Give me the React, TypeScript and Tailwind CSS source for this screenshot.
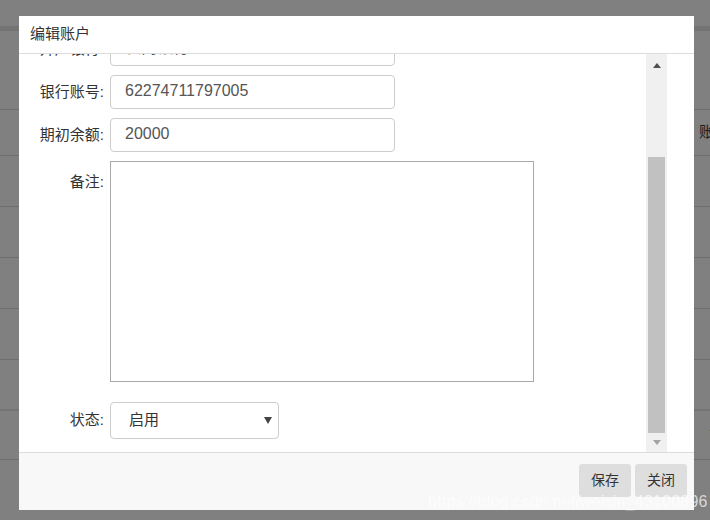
import React from "react"

const cjk = { fontFamily: '"Liberation Sans", "Noto Sans CJK SC", sans-serif' }

function Row({ label, children }: { label: string; children: React.ReactNode }) {
  return (
    <div className="flex items-start">
      <label className="w-[86px] shrink-0 text-right text-[15px] leading-[34px] text-[#333] pr-[1px]">{label}</label>
      <div className="ml-[5px]">{children}</div>
    </div>
  )
}

function TextInput({ value }: { value: string }) {
  return (
    <div className="w-[285px] h-[34px] border border-[#ccc] rounded-[4px] px-[14px] text-[16px] leading-[30px] text-[#555] bg-white overflow-hidden">
      {value}
    </div>
  )
}

export default function App() {
  return (
    <div className="relative w-[710px] h-[520px] bg-[#808080] overflow-hidden" style={cjk}>
      {/* page behind the overlay */}
      <div className="absolute inset-0 flex flex-col">
        <div className="h-[26px] bg-[#808080]" />
        <div className="h-[5px] bg-[#747474]" />
        <div className="h-[79px] border-b border-[#6e6e6e]" />
        <div className="h-[46px] border-b border-[#6e6e6e] flex items-center justify-end">
          <span className="text-[15px] text-[#1a1a1a] mr-[-4px]">账</span>
        </div>
        <div className="h-[51px] border-b border-[#6e6e6e]" />
        <div className="h-[51px] border-b border-[#6e6e6e]" />
        <div className="h-[51px] border-b border-[#6e6e6e]" />
        <div className="h-[51px] border-b border-[#6e6e6e]" />
        <div className="h-[51px] border-b-2 border-[#747474]" />
        <div className="h-[49px] border-b border-[#6e6e6e] flex items-center justify-end">
          <span className="text-[15px] text-[#8b0000] mr-[-8px]">¥</span>
        </div>
      </div>

      {/* dialog */}
      <div className="absolute left-[19px] top-[16px] w-[675px] h-[494px] bg-white flex flex-col">
        <div className="h-[38px] shrink-0 border-b border-[#dcdcdc] flex items-center pl-[11px] text-[15px] text-[#333]">
          编辑账户
        </div>
        <div className="flex-1 flex min-h-0">
          <div className="w-[627px] overflow-hidden">
            <div className="mt-[-22px] flex flex-col gap-[9px]">
              <Row label="开户银行:">
                <TextInput value="农商银行" />
              </Row>
              <Row label="银行账号:">
                <TextInput value="62274711797005" />
              </Row>
              <Row label="期初余额:">
                <TextInput value="20000" />
              </Row>
              <div className="flex items-start">
                <label className="w-[86px] shrink-0 text-right text-[15px] leading-[22px] pt-[10px] text-[#333] pr-[1px]">备注:</label>
                <div className="ml-[5px] w-[424px] h-[221px] border border-[#a9a9a9] bg-white" />
              </div>
              <div className="flex items-center mt-[11px]">
                <label className="w-[86px] shrink-0 text-right text-[15px] text-[#333] pr-[1px]">状态:</label>
                <div className="ml-[5px] w-[169px] h-[37px] border border-[#ccc] rounded-[4px] flex items-center justify-between pl-[18px] pr-[6px] text-[15px] text-[#333]">
                  <span>启用</span>
                  <span className="w-0 h-0 border-l-[4px] border-r-[4px] border-t-[7px] border-l-transparent border-r-transparent border-t-[#444]" />
                </div>
              </div>
            </div>
          </div>
          {/* scrollbar */}
          <div className="w-[21px] bg-[#f0f0f0] flex flex-col items-center">
            <div className="h-[22px] flex items-center justify-center">
              <span className="w-0 h-0 border-l-[4px] border-r-[4px] border-b-[5px] border-l-transparent border-r-transparent border-b-[#505050]" />
            </div>
            <div className="h-[81px]" />
            <div className="w-[17px] h-[276px] bg-[#c1c1c1]" />
            <div className="flex-1 flex items-center justify-center">
              <span className="w-0 h-0 border-l-[4px] border-r-[4px] border-t-[5px] border-l-transparent border-r-transparent border-t-[#a3a3a3]" />
            </div>
          </div>
        </div>
        <div className="h-[58px] shrink-0 bg-[#f8f8f8] border-t border-[#dcdcdc] flex items-start justify-end gap-[4px] pt-[11px] pr-[7px]">
          <button className="w-[52px] h-[33px] rounded-[3px] bg-[#dedede] text-[14px] text-[#333]">保存</button>
          <button className="w-[52px] h-[33px] rounded-[3px] bg-[#dedede] text-[14px] text-[#333]">关闭</button>
        </div>
      </div>

      {/* watermark */}
      <div className="absolute left-[428px] top-[490px] text-[16px] text-white/70 tracking-[0.2px]" style={{ fontFamily: '"Liberation Sans", Arial, sans-serif' }}>
        https://blog.csdn.net/weixin_43100896
      </div>
    </div>
  )
}
